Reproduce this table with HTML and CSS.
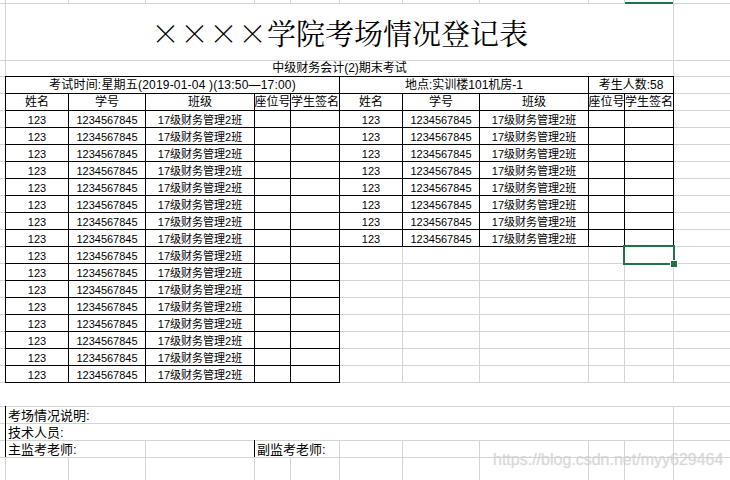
FILE: index.html
```html
<!DOCTYPE html>
<html lang="zh-CN">
<head>
<meta charset="utf-8">
<title>考场情况登记表</title>
<link rel="stylesheet" href="styles.css">
</head>
<body>
<div class="sheet">
  <!-- column header strip -->
  <div></div><div></div><div></div><div></div><div></div><div></div><div></div><div></div><div></div><div></div><div class="col-sel"></div><div></div>

  <!-- title -->
  <div></div><div class="s10 title"><span class="xx">××××</span>学院考场情况登记表</div><div></div>
  <!-- subtitle -->
  <div></div><div class="s10 sub">中级财务会计(2)期末考试</div><div></div>
  <!-- info -->
  <div></div>
  <div class="s5 b info wide">考试时间:星期五(2019-01-04 )(13:50—17:00)</div>
  <div class="s3 b info">地点:实训楼101机房-1</div>
  <div class="s2 b info">考生人数:58</div>
  <div></div>
  <!-- header -->
  <div></div>
  <div class="b th">姓名</div><div class="b th">学号</div><div class="b th">班级</div><div class="b th">座位号</div><div class="b th">学生签名</div>
  <div class="b th">姓名</div><div class="b th">学号</div><div class="b th">班级</div><div class="b th">座位号</div><div class="b th">学生签名</div>
  <div></div>

  <!-- rows 1-8 -->
  <div></div><div class="b td">123</div><div class="b td">1234567845</div><div class="b td">17级财务管理2班</div><div class="b"></div><div class="b"></div><div class="b td">123</div><div class="b td">1234567845</div><div class="b td">17级财务管理2班</div><div class="b"></div><div class="b"></div><div></div>
  <div></div><div class="b td">123</div><div class="b td">1234567845</div><div class="b td">17级财务管理2班</div><div class="b"></div><div class="b"></div><div class="b td">123</div><div class="b td">1234567845</div><div class="b td">17级财务管理2班</div><div class="b"></div><div class="b"></div><div></div>
  <div></div><div class="b td">123</div><div class="b td">1234567845</div><div class="b td">17级财务管理2班</div><div class="b"></div><div class="b"></div><div class="b td">123</div><div class="b td">1234567845</div><div class="b td">17级财务管理2班</div><div class="b"></div><div class="b"></div><div></div>
  <div></div><div class="b td">123</div><div class="b td">1234567845</div><div class="b td">17级财务管理2班</div><div class="b"></div><div class="b"></div><div class="b td">123</div><div class="b td">1234567845</div><div class="b td">17级财务管理2班</div><div class="b"></div><div class="b"></div><div></div>
  <div></div><div class="b td">123</div><div class="b td">1234567845</div><div class="b td">17级财务管理2班</div><div class="b"></div><div class="b"></div><div class="b td">123</div><div class="b td">1234567845</div><div class="b td">17级财务管理2班</div><div class="b"></div><div class="b"></div><div></div>
  <div></div><div class="b td">123</div><div class="b td">1234567845</div><div class="b td">17级财务管理2班</div><div class="b"></div><div class="b"></div><div class="b td">123</div><div class="b td">1234567845</div><div class="b td">17级财务管理2班</div><div class="b"></div><div class="b"></div><div></div>
  <div></div><div class="b td">123</div><div class="b td">1234567845</div><div class="b td">17级财务管理2班</div><div class="b"></div><div class="b"></div><div class="b td">123</div><div class="b td">1234567845</div><div class="b td">17级财务管理2班</div><div class="b"></div><div class="b"></div><div></div>
  <div></div><div class="b td">123</div><div class="b td">1234567845</div><div class="b td">17级财务管理2班</div><div class="b"></div><div class="b"></div><div class="b td">123</div><div class="b td">1234567845</div><div class="b td">17级财务管理2班</div><div class="b"></div><div class="b"></div><div></div>

  <!-- rows 9-16 -->
  <div></div><div class="b td">123</div><div class="b td">1234567845</div><div class="b td">17级财务管理2班</div><div class="b"></div><div class="b"></div><div></div><div></div><div></div><div></div><div class="selected"></div><div></div>
  <div></div><div class="b td">123</div><div class="b td">1234567845</div><div class="b td">17级财务管理2班</div><div class="b"></div><div class="b"></div><div></div><div></div><div></div><div></div><div></div><div></div>
  <div></div><div class="b td">123</div><div class="b td">1234567845</div><div class="b td">17级财务管理2班</div><div class="b"></div><div class="b"></div><div></div><div></div><div></div><div></div><div></div><div></div>
  <div></div><div class="b td">123</div><div class="b td">1234567845</div><div class="b td">17级财务管理2班</div><div class="b"></div><div class="b"></div><div></div><div></div><div></div><div></div><div></div><div></div>
  <div></div><div class="b td">123</div><div class="b td">1234567845</div><div class="b td">17级财务管理2班</div><div class="b"></div><div class="b"></div><div></div><div></div><div></div><div></div><div></div><div></div>
  <div></div><div class="b td">123</div><div class="b td">1234567845</div><div class="b td">17级财务管理2班</div><div class="b"></div><div class="b"></div><div></div><div></div><div></div><div></div><div></div><div></div>
  <div></div><div class="b td">123</div><div class="b td">1234567845</div><div class="b td">17级财务管理2班</div><div class="b"></div><div class="b"></div><div></div><div></div><div></div><div></div><div></div><div></div>
  <div></div><div class="b td">123</div><div class="b td">1234567845</div><div class="b td">17级财务管理2班</div><div class="b"></div><div class="b"></div><div></div><div></div><div></div><div></div><div></div><div></div>

  <!-- spacer row -->
  <div class="s12"></div>

  <!-- footer -->
  <div></div><div class="s10 foot lb">考场情况说明:</div><div></div>
  <div></div><div class="s10 foot lb">技术人员:</div><div></div>
  <div></div><div class="s2 foot lb last">主监考老师:</div><div></div><div class="s2 foot lb last">副监考老师:</div><div></div><div></div><div></div><div></div><div></div><div></div>

  <!-- last row -->
  <div></div><div></div><div></div><div></div><div></div><div></div><div></div><div></div><div></div><div></div><div></div><div></div>

  <div class="watermark">https://blog.csdn.net/myy629464</div>
</div>
</body>
</html>
```

FILE: styles.css
```css
html, body {
  margin: 0;
  padding: 0;
  background: #fff;
  overflow: hidden;
}

.sheet {
  position: relative;
  width: 731px;
  height: 481px;
  display: grid;
  grid-template-columns: 5px 62px 76px 108px 35px 48px 62px 76px 108px 35px 48px 57px;
  grid-template-rows: 3px 56px 15px 16px 16px repeat(16, 16px) 23px 16px 16px 16px 23px;
  gap: 1px;
  background: #d4d4d4;
  font-family: "Liberation Sans", "Noto Sans CJK SC", sans-serif;
  color: #000;
}

.sheet > div {
  background: #fff;
  display: flex;
  align-items: flex-end;
  justify-content: center;
  white-space: nowrap;
  font-size: 11px;
  line-height: 14px;
  min-width: 0;
}

.s2 { grid-column: span 2; }
.s3 { grid-column: span 3; }
.s5 { grid-column: span 5; }
.s10 { grid-column: span 10; }
.s12 { grid-column: span 12; }

.b { outline: 1px solid #000; }

.col-sel { box-shadow: 0 1px 0 #217346, inset 0 -1px 0 #217346; }

.sheet > .title {
  align-items: center;
  font-family: "Noto Serif CJK SC", "Noto Sans CJK SC", serif;
  font-size: 29px;
  line-height: 40px;
  padding-top: 1px;
}

.xx { font-feature-settings: "fwid" 1; }

.sheet > .sub,
.sheet > .info,
.sheet > .th {
  font-size: 12px;
  line-height: 15px;
}

.sheet > .wide { letter-spacing: 0.2px; }

.sheet > .td {
  font-size: 11px;
  line-height: 14px;
}

.sheet > .foot {
  justify-content: flex-start;
  padding-left: 2px;
  font-size: 13px;
  line-height: 15px;
}

.sheet > .lb { position: relative; }

.lb::before {
  content: "";
  position: absolute;
  left: -1px;
  top: -1px;
  bottom: -1px;
  width: 1px;
  background: #000;
}

.last::before { bottom: 0; }

.sheet > .selected {
  position: relative;
  outline: 2px solid #217346;
}

.selected::after {
  content: "";
  position: absolute;
  right: -4px;
  bottom: -4px;
  width: 6px;
  height: 6px;
  background: #217346;
  box-shadow: 0 0 0 1px #fff;
}

.sheet > .watermark {
  position: absolute;
  left: 493px;
  top: 450px;
  background: transparent;
  font-family: "Liberation Sans", sans-serif;
  font-size: 16px;
  line-height: 20px;
  color: rgba(215, 215, 215, 0.8);
  text-shadow: 0 0 1px rgba(160, 160, 160, 0.35);
}
```
